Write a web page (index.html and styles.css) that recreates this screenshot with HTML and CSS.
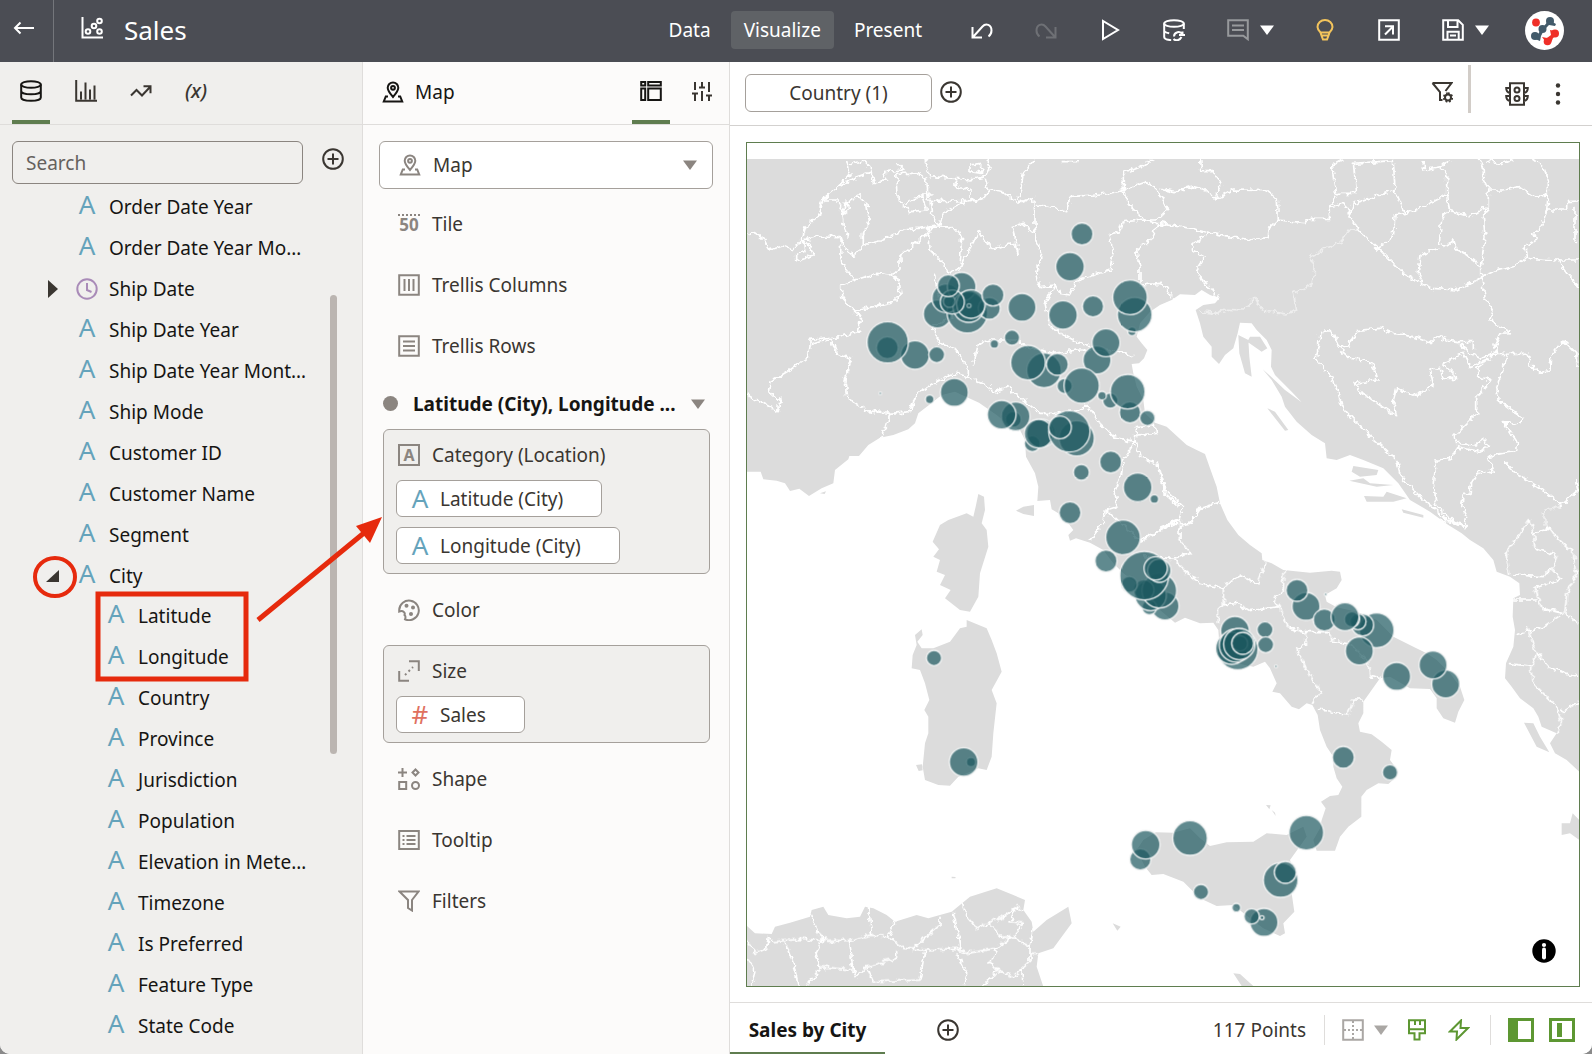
FILE: index.html
```html
<!DOCTYPE html>
<html lang="en">
<head>
<meta charset="utf-8">
<title>Sales</title>
<meta name="viewport" content="width=device-width, initial-scale=1">
<link rel="stylesheet" href="styles.css">
</head>
<body>
<svg class="defs" aria-hidden="true">
  <symbol id="i-plus" viewBox="0 0 22 22"><circle cx="11" cy="11" r="9.800"/><path d="M11 5.500v11M5.500 11h11"/></symbol>
  <symbol id="i-map" viewBox="0 0 22 22"><path d="M11 16C8 12.500 5.700 10 5.700 6.800a5.300 5.300 0 0 1 10.600 0C16.300 10 14 12.500 11 16z"/><circle cx="11" cy="6.800" r="1.900"/><path d="M6 15.500H3.800L1.800 20.500h18.400l-2-5H16"/></symbol>
  <symbol id="i-down" viewBox="0 0 14 14"><path class="solid" d="M0 2.500h14L7 12z"/></symbol>
</svg>

<div class="app">
<header class="topbar">
  <button class="back" aria-label="Back"><svg class="icon" viewBox="0 0 22 22"><path d="M21 11H2M7.500 5.500 2 11l5.500 5.500"/></svg></button>
  <h1 class="title"><svg class="icon" viewBox="0 0 22 22"><path d="M1.500 0v20.500H22"/><circle cx="7" cy="14.500" r="2.300"/><circle cx="13" cy="9" r="2.300"/><circle cx="18.500" cy="4" r="2.300"/><circle cx="18.500" cy="14.500" r="2.300"/></svg>Sales</h1>
  <nav class="modes">
    <button>Data</button>
    <button class="on">Visualize</button>
    <button>Present</button>
  </nav>
  <div class="actions">
    <button aria-label="Undo"><svg class="icon" viewBox="0 0 22 22"><path d="M1.500 8v10.500H11M2 18 11.500 7.500C15 3.500 20.500 6 20.500 11.500c0 2.500-1 4.500-3 6"/></svg></button>
    <button class="off" aria-label="Redo"><svg class="icon" viewBox="0 0 22 22"><path d="M20.500 8v10.500H11M20 18 10.500 7.500C7 3.500 1.500 6 1.500 11.500c0 2.500 1 4.500 3 6"/></svg></button>
    <button aria-label="Preview"><svg class="icon" viewBox="0 0 22 22"><path d="M4 2v18l15-9z"/></svg></button>
    <button aria-label="Refresh data"><svg class="icon" viewBox="0 0 22 22"><ellipse cx="11" cy="4.500" rx="9.800" ry="3.300"/><path d="M1.200 4.500V18c0 1.500 2.500 2.800 7 3.200M20.800 4.500V10M1.200 11.500c0 1.200 2 2.200 5 2.800M11 17.500a4.500 4.500 0 0 1 8.500-2M19.500 12.500v4M10.500 20c2 2 6 2 8-2M22 16h-6"/></svg></button>
    <span class="pair"><button class="dim" aria-label="Notes"><svg class="icon" viewBox="0 0 22 22"><path d="M1.200 1.200h19.600v19l-4.500-3.500H1.200zM5 6.500h12M5 11h12"/></svg></button><button aria-label="Notes menu"><svg class="caret"><use href="#i-down"/></svg></button></span>
    <button class="bulb" aria-label="Insights"><svg class="icon" viewBox="0 0 20 22"><path d="M4.500 13.500C2.500 11.500 1.500 10 1.500 8a7.500 7 0 0 1 15 0c0 2-1 3.500-3 5.500zM4.500 13.500h9l-1 3h-7zM5.500 16.500h7l-1.500 4H7z"/></svg></button>
    <button aria-label="Open in window"><svg class="icon" viewBox="0 0 22 22"><path d="M1.200 1.200h19.600v19.600H1.200zM7 15.500l8-8M7 7.200h8v8.300"/></svg></button>
    <span class="pair"><button aria-label="Save"><svg class="icon" viewBox="0 0 22 22"><path d="M1.200 1.200h15l4.600 4.600v15H1.200zM6 1.200V8h9.500V1.200M5.500 20.800v-8h11.200v8M8 16.500h6"/></svg></button><button aria-label="Save menu"><svg class="caret"><use href="#i-down"/></svg></button></span>
    <button class="avatar" aria-label="Account"><svg viewBox="0 0 39 39"><circle cx="19.500" cy="19.500" r="19.500" fill="#fff"/><g fill="#435b6b"><circle cx="25" cy="10" r="4"/><circle cx="17.500" cy="18" r="4"/><circle cx="10" cy="25" r="4"/><path d="M24 9l7 4-1 2-6-1-5 5-3 6-1 5-5-2 5-8z"/></g><g fill="#ef2f28"><circle cx="11" cy="11.500" r="3.900"/><circle cx="30" cy="22.500" r="4"/><circle cx="22.500" cy="30.500" r="3.800"/><path d="M25 19l5 1 2 4-4 3-2 5-6-2-3-4 5 1 4-3z"/></g></svg></button>
  </div>
</header>

<div class="work">
  <aside class="data">
    <div class="strip">
      <button class="tab on" aria-label="Data"><svg class="icon" viewBox="0 0 22 22"><ellipse cx="11" cy="4.500" rx="9.800" ry="3.300"/><path d="M1.200 4.500v13c0 1.800 4 3.300 9.800 3.300s9.800-1.500 9.800-3.300v-13M1.200 11c0 1.800 4 3.300 9.800 3.300s9.800-1.500 9.800-3.300"/></svg></button>
      <button class="tab" aria-label="Visualizations"><svg class="icon" viewBox="0 0 22 22"><path d="M1.200 0v20.800H22M6 11.500v8M10.500 2.500v17M15 9.500v10M19.500 5.500v14"/></svg></button>
      <button class="tab" aria-label="Analytics"><svg class="icon" viewBox="0 0 22 22"><path d="M1 15.500 6.500 10l5.500 5.500 8.500-9M13.500 6.200h7v7"/></svg></button>
      <button class="tab fx" aria-label="Parameters">(x)</button>
    </div>
    <div class="find">
      <input type="text" placeholder="Search" aria-label="Search">
      <button aria-label="Add data"><svg class="icon"><use href="#i-plus"/></svg></button>
    </div>
    <div class="tree">
      <ul>
        <li><i>A</i>Order Date Year</li>
        <li><i>A</i>Order Date Year Mo…</li>
        <li><svg class="twist" viewBox="0 0 14 18"><path class="solid" d="M2 0l10 9-10 9z"/></svg><svg class="clock" viewBox="0 0 22 22"><circle cx="11" cy="11" r="9.700"/><path d="M11 5v7l4.500 2"/></svg>Ship Date</li>
        <li><i>A</i>Ship Date Year</li>
        <li><i>A</i>Ship Date Year Mont…</li>
        <li><i>A</i>Ship Mode</li>
        <li><i>A</i>Customer ID</li>
        <li><i>A</i>Customer Name</li>
        <li><i>A</i>Segment</li>
        <li><svg class="twist" viewBox="0 0 14 18"><path class="solid" d="M13 3v12H0z"/></svg><i>A</i>City</li>
      </ul>
      <ul class="sub">
        <li><i>A</i>Latitude</li>
        <li><i>A</i>Longitude</li>
        <li><i>A</i>Country</li>
        <li><i>A</i>Province</li>
        <li><i>A</i>Jurisdiction</li>
        <li><i>A</i>Population</li>
        <li><i>A</i>Elevation in Mete…</li>
        <li><i>A</i>Timezone</li>
        <li><i>A</i>Is Preferred</li>
        <li><i>A</i>Feature Type</li>
        <li><i>A</i>State Code</li>
      </ul>
      <div class="thumb"></div>
    </div>
  </aside>

  <section class="grammar">
    <div class="strip">
      <h2><svg class="icon"><use href="#i-map"/></svg>Map</h2>
      <button class="tab on" aria-label="Grammar"><svg class="icon" viewBox="0 0 22 22"><path d="M1.200 2h4v3.500h-4zM8.200 2h12.600v3.500H8.200zM1.200 8.500h4V20h-4zM8.200 8.500h12.600V20H8.200z"/></svg></button>
      <button class="tab" aria-label="Properties"><svg class="icon" viewBox="0 0 22 22"><path d="M4 2v8M4 13.500V21M1 13.500h6M11 2v5M8 7.500h6M11 11v10M18 2v10M18 15.500V21M15 15.500h6"/></svg></button>
    </div>
    <div class="pane">
      <div class="pick">
        <svg class="icon"><use href="#i-map"/></svg>
        <select aria-label="Visualization type"><option>Map</option></select>
        <svg class="caret"><use href="#i-down"/></svg>
      </div>
      <div class="slot"><b class="fifty">50</b>Tile</div>
      <div class="slot"><svg class="icon" viewBox="0 0 22 22"><path d="M1.200 1.200h19.600v19.600H1.200zM6.500 5v12M11 5v12M15.500 5v12"/></svg>Trellis Columns</div>
      <div class="slot"><svg class="icon" viewBox="0 0 22 22"><path d="M1.200 1.200h19.600v19.600H1.200zM5 6.500h12M5 11h12M5 15.500h12"/></svg>Trellis Rows</div>
      <button class="layer"><span class="dot"></span><span>Latitude (City), Longitude ...</span><svg class="caret"><use href="#i-down"/></svg></button>
      <div class="group">
        <div class="slot"><b class="boxed">A</b>Category (Location)</div>
        <button class="chip"><i>A</i>Latitude (City)</button>
        <button class="chip"><i>A</i>Longitude (City)</button>
      </div>
      <div class="slot lone"><svg class="icon" viewBox="0 0 22 22"><path d="M1.200 11A9.800 9.800 0 1 1 7 20.300c.8-2 .5-3.500-.5-4.300 1-2-1-5-5.300-3.500z"/><g class="solid"><circle cx="8.500" cy="6.800" r="2"/><circle cx="15" cy="8.500" r="2"/><circle cx="13" cy="15" r="2"/></g></svg>Color</div>
      <div class="group">
        <div class="slot"><svg class="icon" viewBox="0 0 22 22"><path d="M11 1.200h9.800V11M1.200 11v9.800H11"/><path stroke-dasharray="2 3" d="M7 15l8-8"/></svg>Size</div>
        <button class="chip"><i class="num">#</i>Sales</button>
      </div>
      <div class="slot lone"><svg class="icon" viewBox="0 0 22 22"><path d="M4.500 0v9M0 4.500h9M17.500 1.500l3 3-3 3-3-3zM1.200 14h7v7h-7z"/><circle cx="17.500" cy="17.500" r="3.500"/></svg>Shape</div>
      <div class="slot"><svg class="icon" viewBox="0 0 22 22"><path d="M1.200 2h19.600v18H1.200zM8.500 7h9M8.500 11h9M8.500 15h9M4.500 7h2M4.500 11h2M4.500 15h2"/></svg>Tooltip</div>
      <div class="slot"><svg class="icon" viewBox="0 0 22 22"><path d="M1.500 1.500h19l-6.500 8.500v10.500l-4-2.500V10z"/></svg>Filters</div>
    </div>
  </section>

  <main class="canvas">
    <div class="filters">
      <button class="pill">Country (1)</button>
      <button aria-label="Add filter"><svg class="icon"><use href="#i-plus"/></svg></button>
      <button class="right" aria-label="Filter options"><svg class="icon" viewBox="0 0 22 22"><path d="M1.500 2h19l-6 8M1.500 2 9 11v8h2.500"/><circle cx="17" cy="16.500" r="3"/><path stroke-dasharray="1.700 1.700" d="M17 12.300a4.200 4.200 0 1 1 0 8.400 4.200 4.200 0 0 1 0-8.400z"/></svg></button>
      <span class="bar"></span>
      <button aria-label="Data actions"><svg class="light" viewBox="0 0 24 24"><path d="M5 1.200h14v21.600H5zM5 6H1.200c0 3 1.500 4.500 3.800 5M5 14H1.200c0 3 1.500 4.500 3.800 5M19 6h3.800c0 3-1.500 4.500-3.800 5M19 14h3.800c0 3-1.500 4.500-3.800 5"/><circle cx="12" cy="8" r="2.500"/><circle cx="12" cy="16.500" r="2.500"/></svg></button>
      <button aria-label="More"><svg class="more" viewBox="0 0 6 22"><g class="solid"><circle cx="3" cy="2.500" r="2.200"/><circle cx="3" cy="11" r="2.200"/><circle cx="3" cy="19.500" r="2.200"/></g></svg></button>
    </div>
    <div class="stage">
      <div class="frame">
      <svg class="map" viewBox="21 9 2496 2529" preserveAspectRatio="xMidYMid meet" role="img" aria-label="Sales by City">
        <filter id="rough" x="0" y="0" width="1" height="1" color-interpolation-filters="sRGB"><feTurbulence type="fractalNoise" baseFrequency=".06" numOctaves="2" seed="4"/><feDisplacementMap in="SourceGraphic" scale="22" xChannelSelector="R" yChannelSelector="G"/></filter>
        <g class="land">
          <!-- mainland coast -->
          <path d="M21 57H2520V1897L2480 1860 2445 1840 2430 1810 2450 1780 2405 1760 2395 1730 2380 1705 2340 1675 2315 1640 2295 1615 2298 1570 2320 1520 2325 1470 2318 1430 2320 1375 2340 1365 2338 1330 2310 1310 2270 1295 2260 1260 2230 1225 2190 1200 2165 1180 2125 1155 2070 1115 2010 1080 1975 1030 1930 985 1870 960 1830 945 1790 960 1760 955 1755 910 1715 885 1670 845 1635 800 1625 770 1595 720 1568 688 1595 712 1635 750 1685 787 1655 755 1605 705 1593 680 1595 630 1580 600 1550 570 1535 550 1500 548 1493 580 1480 625 1455 645 1437 672 1415 650 1415 620 1390 590 1380 550 1367 510 1390 495 1425 490 1438 475 1410 465 1385 450 1365 465 1320 463 1295 480 1260 495 1230 515 1200 550 1190 590 1205 610 1222 630 1212 655 1197 670 1175 672 1180 700 1190 740 1210 780 1215 820 1245 848 1280 860 1340 915 1370 930 1395 942 1410 985 1430 1040 1440 1090 1462 1140 1495 1185 1530 1215 1565 1240 1567 1260 1595 1270 1630 1290 1710 1298 1775 1292 1800 1295 1805 1320 1790 1345 1755 1365 1760 1385 1790 1402 1850 1415 1910 1440 1960 1490 2020 1520 2060 1540 2090 1560 2130 1600 2160 1640 2173 1680 2155 1715 2145 1748 2110 1735 2090 1705 2090 1675 2070 1647 2010 1645 1950 1610 1920 1615 1895 1650 1870 1685 1870 1720 1855 1750 1860 1775 1895 1783 1925 1805 1955 1830 1950 1860 1965 1880 1970 1910 1945 1932 1915 1930 1880 1950 1864 1970 1864 2030 1825 2060 1800 2090 1785 2132 1730 2132 1720 2100 1740 2065 1745 2040 1757 2005 1743 1985 1770 1968 1795 1965 1807 1940 1790 1915 1780 1880 1780 1850 1760 1820 1740 1770 1733 1725 1717 1695 1700 1690 1677 1708 1655 1700 1620 1660 1597 1655 1610 1630 1590 1585 1575 1565 1540 1580 1492 1570 1440 1540 1435 1470 1420 1448 1380 1450 1335 1433 1305 1448 1260 1410 1190 1330 1150 1300 1120 1270 1090 1230 1050 1208 1008 1195 990 1202 985 1185 1000 1170 985 1150 955 1120 935 1108 930 1080 892 1083 895 1040 885 1000 858 950 855 900 840 870 800 850 770 825 717 788 645 755 605 765 570 793 535 820 525 850 505 868 460 885 420 893 385 915 357 948 328 948 325 958 285 990 280 1030 245 1045 207 1068 178 1046 150 1053 135 1030 110 1022 70 1018 62 995 21 995z"/>
          <!-- Corsica, Sardinia, Elba -->
          <path d="M715 1062 732 1070 735 1110 725 1150 740 1170 745 1220 720 1300 715 1370 690 1415 660 1410 615 1375 632 1350 600 1335 615 1305 590 1295 600 1260 580 1250 597 1228 578 1205 600 1155 625 1140 680 1120 700 1130 707 1100z"/>
          <path d="M680 1440 740 1465 755 1500 770 1540 785 1595 755 1650 770 1690 760 1780 755 1850 740 1890 715 1885 655 1910 630 1937 595 1935 555 1920 548 1880 555 1810 565 1780 565 1730 553 1710 568 1680 555 1630 540 1590 515 1585 518 1545 530 1515 525 1485 545 1468 548 1485 532 1505 545 1525 580 1525 630 1505 660 1465 680 1460zM528 1875l18-2 2 18-12 2zM828 1112 850 1100 882 1095 882 1128 850 1122z"/>
          <!-- Sicily and its islets -->
          <path d="M1248 2077 1300 2078 1350 2065 1380 2095 1410 2118 1460 2107 1540 2105 1580 2080 1640 2085 1690 2060 1700 2090 1650 2160 1670 2220 1655 2260 1663 2315 1630 2350 1635 2380 1620 2388 1570 2365 1530 2335 1480 2295 1430 2298 1380 2275 1330 2225 1270 2202 1235 2205 1215 2180 1190 2130 1210 2100zM1578 1995l14 1-4 12zM1595 2010l10 8 2 10zM1480 2500l20 2 40 36h-35zM2465 2050l25 0 8-30 20 20v60l-28-20-25 5z"/>
          <!-- North Africa -->
          <path d="M21 2358 45 2380 95 2382 105 2360 150 2348 210 2330 215 2310 250 2300 265 2325 320 2335 360 2330 375 2300 400 2305 440 2325 465 2345 530 2325 565 2335 635 2315 690 2270 770 2245 820 2265 855 2280 850 2310 875 2345 880 2375 920 2340 985 2300 995 2350 940 2425 895 2440 890 2480 910 2540H21zM1118 2350l24 10-10 12zM635 2210l12 1-1 4-11 0z"/>
          <!-- Dalmatian islands, Corfu -->
          <path d="M1495 585 1525 600 1528 650 1535 710 1515 700 1498 640zM1530 590 1560 590 1582 625 1565 635 1522 605zM1582 805 1605 815 1645 870 1635 872zM1840 978 1915 990 1910 1005 1860 1010 1835 995zM1828 1022 1870 1015 1890 1030 1960 1035 1910 1040zM1872 1068 1930 1070 1940 1055 2000 1075 1960 1085 1880 1085zM1985 1108 2050 1125 2050 1133 1990 1118zM2352 1748 2380 1750 2400 1790 2428 1837 2390 1820zM240 1060l18-6-4 8z"/>
        </g>
        <g class="edges" filter="url(#rough)">
          <path d="M21 280 44 278 68 296 90 330 128 318 158 330 187 297 198 260 238 225 248 180 290 145 330 100 320 60M187 297 210 320 220 345 170 362 170 342 195 335 190 300 240 288 300 290 310 320 343 348 370 315 370 280 388 240 380 190 355 165 330 180 305 215 310 260 325 290M248 180 290 180 310 210 330 180M315 185l15 20-20 15 5-30M370 315 430 300 490 270 560 262M300 300 305 370 345 420 410 400 450 405 480 390 480 350 510 325 560 280 570 262M345 420 305 435 305 470 340 510 400 500 460 485 480 465 475 420 450 405M340 510 362 530 355 575 300 590 210 598 210 615 240 605 275 600 290 640 335 655 315 720 320 770 380 812 450 820 440 860 420 893M210 615 205 650 150 690 90 725 85 755 120 780 115 815 70 790 21 765M450 820 510 815 530 760 600 720 650 700 685 712 750 740 755 760 800 740 850 780 900 820 960 820 1000 815 1040 795 1080 850 1120 890 1185 905M565 262 570 330 610 370 625 400 660 385 675 350 700 310 715 275 730 300 765 325 820 310 835 345 820 260 850 250 885 280M570 262 640 260 665 290 660 385"/>
          <path d="M585 400 600 480 640 530 580 560 600 610 650 630 685 690 685 712M700 680 715 610 750 600 830 600 860 620 940 640 1010 630 1120 632 1180 650M325 75 370 60 390 80 400 130 440 120 430 95 490 90 470 70M290 145 350 110 395 95M470 100 475 180 510 215 560 210 545 165 500 190M470 100 530 100 560 120 565 180 610 185 690 180 690 150 650 140 645 115 570 110 555 60M545 165h30M570 180 575 225 600 255 610 220 660 190 730 175 750 150 790 155 835 190 880 170 885 220 885 260 890 300 905 340 890 400 900 440 945 435 915 490 930 560 1000 600 1050 620M835 190 850 100 885 60M745 150 735 110 750 80 740 60M650 115 690 120 735 110M690 75 725 70 725 100 690 95zM600 255 565 262M890 195 930 200 980 215 990 170 1060 165 1150 150 1150 100 1200 80 1235 60M1150 150 1165 190 1215 240 1250 240 1285 205 1250 150 1220 125zM1215 240 1150 245 1140 275 1105 285 1120 330 1110 390 1080 400 1010 420 990 465 960 460 945 435M1215 240 1250 250 1320 260M1250 250 1240 290 1190 330 1200 380 1200 435 1260 430 1275 440 1300 475M965 65h50"/>
          <path d="M1185 905 1190 860 1245 855 1250 880 1190 885M1185 905 1150 960 1145 1000 1125 1050 1130 1100 1100 1110 1090 1150 1050 1200M1185 905 1200 950 1250 970 1275 1060 1320 1100M1100 1110 1140 1150 1200 1200 1240 1180 1320 1140"/>
          <g transform="translate(1260 0)">
            <path d="M122 57 125 95 160 95 185 130 165 180 220 150 320 152 352 180 355 240 328 265 325 290 285 295 280 300 200 290 120 270 0 248M0 145 45 155 100 140 140 150 165 180M148 280 100 310 97 330 135 350 110 390 130 430 160 450 178 480M355 240 435 248 450 235 512 235 510 200 530 160 517 75 550 57M530 160 590 160 580 70 700 62 705 150 580 190 570 230 600 275 655 325 700 370 730 400 780 430 820 445 890 450 930 430 965 410 965 370 975 290 970 230 985 200 985 150 970 120 970 80 955 57M510 200 550 190 570 220M705 150 735 220 780 205 860 165 860 100 840 80 790 90 790 60M735 220 705 225 700 290 655 325M860 165 865 210 845 240 838 310 860 320 880 300 890 330 920 345 960 380M865 210 930 230 980 200M838 320 780 345 775 400 785 430M985 150 1030 150 1080 140 1120 170 1165 165 1165 120 1150 80 1120 57M1165 165 1160 210 1145 260 1120 280 1130 300 1095 320 1100 355 1190 360 1257 360M1160 210 1220 210 1220 185 1257 183M1245 200 1245 300 1257 310M965 410 1000 395 1060 380 1100 355M1190 360 1220 400 1257 440M985 60 1020 75 1060 57M840 80 870 60"/>
            <path d="M965 410 975 470 1000 510 990 540 1020 560 1055 578 1020 580 1005 610 1010 640 960 655 930 640 890 605 860 600 830 590 810 608 760 590 700 580 660 565 590 572 565 618 540 625 515 572 480 575 475 620 468 660 515 710 535 760 545 800 620 880 710 960 720 1005 780 1070 850 1130 905 1160M890 605 940 605 940 630M540 628 570 655 635 665 652 720 585 730 600 755 710 830 700 780 710 745 770 770 820 735 810 690 840 685 850 715 895 715 850 670 910 640 930 680 990 655M1010 640 1105 640 1110 675 1140 700 1170 690 1172 650 1210 602 1250 640 1254 680M1045 640 1010 740 1015 780 1090 835 1070 855 1030 845 1072 910 1070 935 1030 940 985 950 1000 1000 960 990 935 1030 930 1060 910 1060 905 1100 920 1130 915 1160 890 1150 830 1100 820 1030 830 960 875 955 890 920 960 935 988 920 970 898 945 915 890 910 885 885 950 820 950 770 995 715 960 715 950 685 990 655M1030 960 1070 1000 1150 1050 1205 1095 1257 1050 1250 1020M0 990 15 1050 70 1100 60 1140 0 1165M180 1088 120 1105 90 1150 60 1155 60 1200"/>
            <path opacity=".5" d="M115 515 170 520 200 508 250 510 285 475 310 510 380 522 410 510 400 460 460 430 465 380 450 350 500 325 550 300 565 268 600 275M1205 1095 1150 1115 1160 1170"/>
          </g>
          <g transform="translate(1230 1140)">
            <path d="M90 0 85 55 120 100 70 115 100 150 150 190 220 205 245 180 270 165 320 190 348 125M220 205 220 255 205 270 205 310M220 255 260 250 300 272 390 260 395 285 420 325 465 335 470 375 440 385 460 430 495 490 510 515 487 555M390 260 370 235 400 210 402 152M465 335 540 335 545 360 600 370 655 430 660 470 690 475M503 568 540 570 545 580 595 585 608 540 640 540M-20 60 60 10 90 0M70 115-20 110M1140 0 1110 40 1068 100 1080 170M1140 0 1150 40 1200 25 1225 60 1270 100 1280 160 1250 220 1245 280 1285 310M1150 40 1155 85 1218 105 1205 145 1180 170 1090 165M1205 145 1235 175 1155 205 1175 265 1240 280M1088 240 1160 240M1240 280 1180 320 1095 345M1130 320 1160 400 1145 440 1075 430M1160 400 1200 445 1285 470M1145 440 1150 490 1220 560 1235 600 1220 640M1235 575 1288 545M870 0 940 15"/>
          </g>
          <g transform="translate(0 1140)">
            <path d="M21 1262 45 1300 80 1285 85 1250 95 1265 180 1258 250 1260M215 1185 235 1240 255 1260 325 1262 390 1245 445 1250 490 1285 550 1290 650 1285 680 1300 770 1285 820 1250 870 1280M385 1160 395 1245M465 1205 445 1250M600 1190 600 1215 520 1285M640 1175 655 1240 660 1290M665 1145 680 1190 710 1225 790 1190 830 1160 850 1170M745 1210 790 1255 820 1250 850 1210 810 1205 830 1160M135 1265 160 1330 175 1398M250 1260 228 1300 240 1340 340 1350 325 1262M340 1350 350 1370 380 1340 470 1315 470 1290M380 1340 400 1385 540 1380 555 1290M650 1300 680 1360 670 1398M770 1285 750 1325 770 1350 730 1398M770 1350 820 1370 870 1325 870 1280 880 1230M240 1345 200 1398M21 1310 45 1350 35 1398M845 1350 850 1398M870 1300 900 1300"/>
          </g>
        </g>
        <g class="points">
          <circle cx="1026" cy="282" r="33"/><circle cx="990" cy="380" r="43"/><circle cx="592" cy="522" r="42"/><circle cx="682" cy="518" r="61"/><circle cx="619" cy="475" r="43"/><circle cx="748" cy="505" r="33"/><circle cx="665" cy="440" r="43"/><circle cx="686" cy="500" r="47"/><circle cx="693" cy="492" r="43"/><circle cx="637" cy="486" r="36"/><circle cx="628" cy="484" r="18" stroke-opacity=".3"/><circle cx="625" cy="437" r="33"/><circle cx="759" cy="465" r="33"/><circle cx="687" cy="497" r="6" stroke-opacity=".5"/>
          <circle cx="846" cy="502" r="42"/><circle cx="969" cy="525" r="43"/><circle cx="1059" cy="499" r="32"/><circle cx="1176" cy="574" r="13"/><circle cx="1184" cy="524" r="52"/><circle cx="1170" cy="472" r="52"/><circle cx="1071" cy="660" r="42"/><circle cx="1098" cy="608" r="42"/><circle cx="525" cy="645" r="43"/><circle cx="442" cy="623" r="33"/><circle cx="443" cy="607" r="62"/><circle cx="590" cy="644" r="24"/><circle cx="816" cy="593" r="23"/><circle cx="763" cy="612" r="13"/>
          <circle cx="912" cy="691" r="52"/><circle cx="864" cy="668" r="52"/><circle cx="952" cy="673" r="33"/><circle cx="974" cy="738" r="23"/><circle cx="1025" cy="737" r="53"/><circle cx="421" cy="760" r="4"/><circle cx="569" cy="778" r="13"/><circle cx="643" cy="757" r="42"/><circle cx="1111" cy="782" r="23"/><circle cx="1086" cy="767" r="13"/><circle cx="1170" cy="817" r="32"/><circle cx="1163" cy="755" r="52"/><circle cx="1222" cy="834" r="23"/>
          <circle cx="820" cy="838" r="24"/><circle cx="827" cy="829" r="43"/><circle cx="785" cy="824" r="43"/><circle cx="877" cy="911" r="24"/><circle cx="903" cy="880" r="43"/><circle cx="896" cy="881" r="43"/><circle cx="1010" cy="895" r="53"/><circle cx="988" cy="874" r="62"/><circle cx="960" cy="862" r="34"/><circle cx="1112" cy="966" r="33"/><circle cx="1024" cy="997" r="24"/><circle cx="1193" cy="1042" r="43"/><circle cx="1243" cy="1077" r="13"/><circle cx="990" cy="1118" r="33"/>
          <circle cx="1149" cy="1192" r="52"/><circle cx="1098" cy="1263" r="33"/><circle cx="1275" cy="1398" r="42"/><circle cx="1228" cy="1402" r="22"/><circle cx="1232" cy="1365" r="47"/><circle cx="1258" cy="1352" r="52"/><circle cx="1212" cy="1350" r="30" stroke-opacity=".3"/><circle cx="1168" cy="1333" r="24"/><circle cx="1213" cy="1307" r="73"/><circle cx="1258" cy="1292" r="35"/><circle cx="1247" cy="1285" r="35"/>
          <circle cx="582" cy="1554" r="23"/><circle cx="693" cy="1866" r="14"/><circle cx="671" cy="1866" r="43"/><circle cx="1201" cy="2158" r="32"/><circle cx="1217" cy="2114" r="43"/>
          <circle cx="1698" cy="1399" r="42"/><circle cx="1671" cy="1351" r="33"/><circle cx="1757" cy="1363" r="4"/><circle cx="1753" cy="1440" r="33"/><circle cx="1910" cy="1471" r="52"/><circle cx="1868" cy="1455" r="33"/><circle cx="1854" cy="1445" r="24"/><circle cx="1836" cy="1438" r="23"/><circle cx="1815" cy="1430" r="42"/><circle cx="1858" cy="1533" r="42"/><circle cx="1575" cy="1469" r="24"/><circle cx="1577" cy="1514" r="24"/><circle cx="1608" cy="1579" r="4"/>
          <circle cx="1485" cy="1472" r="43"/><circle cx="1493" cy="1528" r="61"/><circle cx="1475" cy="1525" r="48"/><circle cx="1488" cy="1516" r="50"/><circle cx="1498" cy="1512" r="47"/><circle cx="1500" cy="1510" r="23" stroke-opacity=".3"/><circle cx="1508" cy="1510" r="33"/>
          <circle cx="1970" cy="1609" r="42"/><circle cx="2117" cy="1632" r="42"/><circle cx="2079" cy="1575" r="42"/><circle cx="1810" cy="1852" r="33"/><circle cx="1950" cy="1897" r="23"/><circle cx="1350" cy="2094" r="52"/><circle cx="1699" cy="2078" r="52"/><circle cx="1622" cy="2220" r="52"/><circle cx="1636" cy="2197" r="33"/><circle cx="1383" cy="2256" r="23"/><circle cx="1489" cy="2303" r="13"/><circle cx="1572" cy="2347" r="42"/><circle cx="1535" cy="2329" r="23"/><circle cx="1566" cy="2333" r="6"/>
        </g>
      </svg>
      <button class="info" aria-label="Map information"><svg viewBox="0 0 24 24"><circle cx="12" cy="12" r="11.700"/><path d="M12 10.500v8" stroke="#fff" stroke-width="4" stroke-linecap="round"/><circle cx="12" cy="6" r="2.100" fill="#fff"/></svg></button>
      </div>
    </div>
    <footer class="status">
      <button class="sheet">Sales by City</button>
      <button aria-label="Add canvas"><svg class="icon"><use href="#i-plus"/></svg></button>
      <span class="count">117 Points</span>
      <span class="rule"></span>
      <span class="pair grey"><button aria-label="Grid"><svg class="icon" viewBox="0 0 22 22"><path d="M1.200 1.200h19.600v19.600H1.200z"/><path stroke-dasharray="2 2" d="M11 2v18M2 11h18"/></svg></button><button aria-label="Grid menu"><svg class="caret"><use href="#i-down"/></svg></button></span>
      <button class="green" aria-label="Brushing"><svg class="icon" viewBox="0 0 22 22"><path d="M3 1.200h16v9H3zM9 1v5M14 1v5M3 10.200v4h5.500v6.300h5v-6.300H19v-4"/></svg></button>
      <button class="green" aria-label="Auto apply"><svg class="icon" viewBox="0 0 22 22"><path d="M13 1.500 2 12.500h7L8.500 20.500 20 9h-7.500z"/></svg></button>
      <span class="rule"></span>
      <button class="green" aria-label="Left panel"><svg class="wide" viewBox="0 0 26 24"><path d="M1.500 1.500h23v21h-23z"/><path class="solid" d="M1 1h9v22H1z"/></svg></button>
      <button class="green" aria-label="Grammar panel"><svg class="wide" viewBox="0 0 26 24"><path d="M1.500 1.500h23v21h-23z"/><path class="solid" d="M8 5h5v14H8z"/></svg></button>
    </footer>
  </main>

  <svg class="notes" viewBox="0 0 400 640" aria-hidden="true"><ellipse cx="55" cy="515" rx="20" ry="19"/><path d="M98 532h148v85H98zM258 558 370 466"/><path class="head" d="M382 455l-12 26-14-17z"/></svg>
</div>
</div>
</body>
</html>
```
FILE: styles.css
```css
* { box-sizing: border-box; }

body {
  margin: 0;
  background: #8a8a8a;
  color: #161513;
  font: 19px/24px "Noto Sans", "Open Sans", sans-serif;
}

h1, h2, ul { margin: 0; padding: 0; font-weight: 400; }
ul { list-style: none; }

button, input, select { font: inherit; color: inherit; }
button { border: 0; padding: 0; background: none; display: flex; align-items: center; }

svg { display: block; flex: none; fill: none; stroke: currentColor; stroke-width: 2; }
.defs { position: absolute; width: 0; height: 0; }
.solid { fill: currentColor; stroke: none; }
.icon { width: 22px; height: 22px; }
.caret { width: 14px; height: 14px; }

.app {
  min-height: 100vh;
  display: flex;
  flex-direction: column;
  background: #fff;
  border-radius: 0 0 10px 10px;
  overflow: hidden;
}

/* Top bar */
.topbar {
  height: 62px;
  display: flex;
  align-items: center;
  padding-bottom: 2px;
  background: #4b4d54;
  color: #fff;
}
.back { width: 54px; height: 62px; margin-bottom: -2px; padding-left: 13px; padding-bottom: 6px; border-right: 1px solid #74767b; }
.title { display: flex; align-items: center; gap: 21px; padding-left: 27px; font-size: 26px; line-height: 32px; }
.title .icon { margin-bottom: 4px; }
.modes { display: flex; gap: 7px; margin-left: auto; margin-right: 36px; }
.modes button { height: 38px; padding: 0 13px; border-radius: 4px; }
.modes .on { background: #5f6266; }
.actions { display: flex; align-items: center; gap: 42px; padding-right: 28px; }
.pair { display: flex; align-items: center; gap: 11px; }
.off { color: #6e7075; }
.dim { color: #97999c; }
.dim + button { color: #fff; }
.bulb { color: #f3c45c; }
.bulb .icon { width: 20px; }
.avatar { margin-left: -6px; }
.avatar svg { width: 39px; height: 39px; stroke: none; }

/* Panels */
.work { position: relative; flex: 1; display: flex; }
.strip { height: 63px; display: flex; border-bottom: 1px solid #dfdddb; color: #3a3631; }
.tab { width: 38px; height: 62px; justify-content: center; border-bottom: 4px solid transparent; }
.tab.on { border-color: #5f7d4f; color: #161513; }

.data { width: 363px; background: #f0efed; border-right: 1px solid #dfdddb; }
.data .strip { padding-left: 12px; gap: 17px; }
.fx { font-style: italic; font-weight: 500; font-size: 20px; }
.find { display: flex; gap: 19px; padding: 16px 18px 0 12px; color: #3a3631; }
.find input {
  flex: 1;
  min-width: 0;
  height: 43px;
  padding: 0 13px;
  background: transparent;
  border: 1px solid #8b8580;
  border-radius: 6px;
}
.find input::placeholder { color: #65615d; opacity: 1; }
.find button { height: 36px; }

.tree { position: relative; padding-top: 2px; }
.tree li { height: 41px; display: flex; align-items: center; padding-left: 76px; }
.tree .sub { margin-top: -1px; }
.tree .sub li { padding-left: 105px; }
.tree i, .chip i { font: 400 26px/34px "Noto Sans", sans-serif; color: #65a3bb; width: 22px; text-align: center; }
.tree i { padding-bottom: 5px; }
.chip i { padding-bottom: 2px; }
.tree i, .clock { margin-right: 11px; }
.clock { width: 22px; height: 22px; color: #a98bb8; }
.twist { width: 14px; height: 18px; margin-left: -30px; margin-right: 16px; color: #3a3631; }
.thumb { position: absolute; right: 25px; top: 111px; width: 7px; height: 459px; border-radius: 4px; background: #bbb5b1; }

.grammar { width: 367px; background: #fcfbfa; border-right: 1px solid #dfdddb; }
.grammar .strip { padding-right: 8px; gap: 13px; }
.grammar h2 { flex: 1; display: flex; align-items: center; gap: 11px; padding: 0 0 3px 19px; font-size: 19px; line-height: 24px; color: #161513; }
.pane { padding: 16px 15px 16px 16px; color: #3a3631; }
.pick {
  height: 48px;
  display: flex;
  align-items: center;
  padding: 0 15px 0 19px;
  margin: 0 1px 4px 0;
  background: #fff;
  border: 1px solid #a5a09b;
  border-radius: 6px;
}
.pick svg, .slot svg, .layer svg { color: #8b8580; }
.pick select { flex: 1; height: 40px; padding: 0 0 0 12px; border: 0; background: none; appearance: none; }
.slot { height: 61px; display: flex; align-items: center; gap: 12px; padding-left: 19px; }
.lone { margin-top: 5px; }
.slot b { width: 22px; text-align: center; color: #8b8580; }
.fifty { font-size: 17px; line-height: 18px; border-top: 2px dotted #8b8580; }
.boxed { border: 2px solid #8b8580; font-size: 16px; line-height: 18px; }
.layer { width: 100%; height: 53px; padding: 2px 9px 0 4px; font-weight: 700; color: #161513; }
.layer svg { margin-left: auto; }
.dot { width: 15px; height: 15px; margin-right: 15px; border-radius: 50%; background: #8b8580; }
.group {
  display: flex;
  flex-direction: column;
  align-items: flex-start;
  gap: 10px;
  margin: 0 4px;
  padding: 0 12px 9px;
  background: #f0efed;
  border: 1px solid #a5a09b;
  border-radius: 6px;
}
.group .slot { height: 50px; padding-left: 2px; margin-bottom: -10px; }
.lone + .group { margin-top: 5px; }
.chip { height: 37px; padding: 0 38px 0 12px; gap: 9px; background: #fff; border: 1px solid #a5a09b; border-radius: 6px; }
.chip .num { color: #e0715f; }

/* Canvas */
.canvas { flex: 1; min-width: 0; display: flex; flex-direction: column; background: #fff; }
.filters { height: 64px; display: flex; align-items: center; gap: 8px; padding: 0 31px 4px 15px; border-bottom: 1px solid #d3d1cf; color: #3a3631; }
.pill { width: 187px; height: 38px; justify-content: center; margin-top: 2px; border: 1px solid #a5a09b; border-radius: 6px; }
.right { margin-left: auto; }
.bar { width: 3px; height: 48px; margin: 0 26px 6px 7px; background: #d2cdc8; }
.light { width: 24px; height: 24px; margin: 4px 18px 0 0; }
.more { width: 6px; height: 22px; margin-top: 4px; }
.stage { flex: 1; display: flex; padding: 16px 12px 15px 16px; }
.frame { position: relative; flex: 1; border: 1px solid #5f7d4f; }
.map { width: 100%; height: 100%; stroke: none; }
.land { fill: #dcdcdc; }
.edges { stroke: #fff; stroke-width: 5; stroke-linejoin: round; }
.points { fill: #1c595f; fill-opacity: .7; stroke: #f4f6f6; stroke-opacity: .95; stroke-width: 4; }
.info { position: absolute; right: 23px; bottom: 23px; }
.info svg { width: 24px; height: 24px; fill: #000; stroke: none; }

.status { height: 52px; display: flex; align-items: center; border-top: 1px solid #dfdddb; padding: 3px 17px 0 0; color: #3a3631; }
.sheet { height: 48px; width: 155px; justify-content: center; margin-right: 52px; padding-top: 2px; font-weight: 700; color: #161513; border-bottom: 2px solid #5f7d4f; }
.count { margin-left: auto; }
.rule { width: 1px; height: 30px; margin: 0 17px 0 18px; background: #dfdddb; }
.grey { color: #aaa7a4; margin-right: 18px; gap: 10px; }
.green { color: #5d9732; margin-right: 20px; }
.green + .rule { margin-left: 0; }
.wide { width: 26px; height: 24px; stroke-width: 3; }
.green:has(.wide) { margin-right: 15px; }
.green:last-child { margin-right: 0; }

/* Red callouts drawn over both panels */
.notes { position: absolute; left: 0; top: 0; width: 400px; height: 640px; stroke: #e62a0d; stroke-width: 5; pointer-events: none; }
.notes ellipse { stroke-width: 4; }
.notes .head { fill: #e62a0d; stroke: none; }
```
